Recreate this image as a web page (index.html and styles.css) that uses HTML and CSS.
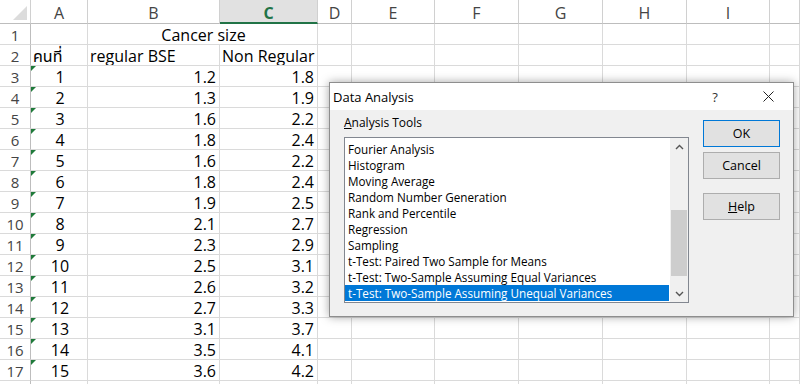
FILE: index.html
```html
<!DOCTYPE html>
<html lang="th">
<head>
    <meta charset="UTF-8">
    <title>Data Analysis</title>
    <link rel="stylesheet" href="styles.css">
</head>
<body>
    <div class="sheet">
        <div class="row head">
            <div class="corner"><span class="tri"></span></div>
            <div class="ch">A</div>
            <div class="ch">B</div>
            <div class="ch sel">C</div>
            <div class="ch">D</div>
            <div class="ch">E</div>
            <div class="ch">F</div>
            <div class="ch">G</div>
            <div class="ch">H</div>
            <div class="ch">I</div>
            <div class="ch"></div>
        </div>
        <div class="row">
            <div class="rh">1</div>
            <div class="c"></div>
            <div class="c merged">Cancer size</div>
            <div class="c"></div><div class="c"></div><div class="c"></div><div class="c"></div><div class="c"></div><div class="c"></div><div class="c"></div>
        </div>
        <div class="row">
            <div class="rh">2</div>
            <div class="c">คนที่</div>
            <div class="c">regular BSE</div>
            <div class="c">Non Regular</div>
            <div class="c"></div><div class="c"></div><div class="c"></div><div class="c"></div><div class="c"></div><div class="c"></div><div class="c"></div>
        </div>
        <div class="row">
            <div class="rh">3</div><div class="c txt">1</div><div class="c num">1.2</div><div class="c num">1.8</div>
            <div class="c"></div><div class="c"></div><div class="c"></div><div class="c"></div><div class="c"></div><div class="c"></div><div class="c"></div>
        </div>
        <div class="row">
            <div class="rh">4</div><div class="c txt">2</div><div class="c num">1.3</div><div class="c num">1.9</div>
            <div class="c"></div><div class="c"></div><div class="c"></div><div class="c"></div><div class="c"></div><div class="c"></div><div class="c"></div>
        </div>
        <div class="row">
            <div class="rh">5</div><div class="c txt">3</div><div class="c num">1.6</div><div class="c num">2.2</div>
            <div class="c"></div><div class="c"></div><div class="c"></div><div class="c"></div><div class="c"></div><div class="c"></div><div class="c"></div>
        </div>
        <div class="row">
            <div class="rh">6</div><div class="c txt">4</div><div class="c num">1.8</div><div class="c num">2.4</div>
            <div class="c"></div><div class="c"></div><div class="c"></div><div class="c"></div><div class="c"></div><div class="c"></div><div class="c"></div>
        </div>
        <div class="row">
            <div class="rh">7</div><div class="c txt">5</div><div class="c num">1.6</div><div class="c num">2.2</div>
            <div class="c"></div><div class="c"></div><div class="c"></div><div class="c"></div><div class="c"></div><div class="c"></div><div class="c"></div>
        </div>
        <div class="row">
            <div class="rh">8</div><div class="c txt">6</div><div class="c num">1.8</div><div class="c num">2.4</div>
            <div class="c"></div><div class="c"></div><div class="c"></div><div class="c"></div><div class="c"></div><div class="c"></div><div class="c"></div>
        </div>
        <div class="row">
            <div class="rh">9</div><div class="c txt">7</div><div class="c num">1.9</div><div class="c num">2.5</div>
            <div class="c"></div><div class="c"></div><div class="c"></div><div class="c"></div><div class="c"></div><div class="c"></div><div class="c"></div>
        </div>
        <div class="row">
            <div class="rh">10</div><div class="c txt">8</div><div class="c num">2.1</div><div class="c num">2.7</div>
            <div class="c"></div><div class="c"></div><div class="c"></div><div class="c"></div><div class="c"></div><div class="c"></div><div class="c"></div>
        </div>
        <div class="row">
            <div class="rh">11</div><div class="c txt">9</div><div class="c num">2.3</div><div class="c num">2.9</div>
            <div class="c"></div><div class="c"></div><div class="c"></div><div class="c"></div><div class="c"></div><div class="c"></div><div class="c"></div>
        </div>
        <div class="row">
            <div class="rh">12</div><div class="c txt">10</div><div class="c num">2.5</div><div class="c num">3.1</div>
            <div class="c"></div><div class="c"></div><div class="c"></div><div class="c"></div><div class="c"></div><div class="c"></div><div class="c"></div>
        </div>
        <div class="row">
            <div class="rh">13</div><div class="c txt">11</div><div class="c num">2.6</div><div class="c num">3.2</div>
            <div class="c"></div><div class="c"></div><div class="c"></div><div class="c"></div><div class="c"></div><div class="c"></div><div class="c"></div>
        </div>
        <div class="row">
            <div class="rh">14</div><div class="c txt">12</div><div class="c num">2.7</div><div class="c num">3.3</div>
            <div class="c"></div><div class="c"></div><div class="c"></div><div class="c"></div><div class="c"></div><div class="c"></div><div class="c"></div>
        </div>
        <div class="row">
            <div class="rh">15</div><div class="c txt">13</div><div class="c num">3.1</div><div class="c num">3.7</div>
            <div class="c"></div><div class="c"></div><div class="c"></div><div class="c"></div><div class="c"></div><div class="c"></div><div class="c"></div>
        </div>
        <div class="row">
            <div class="rh">16</div><div class="c txt">14</div><div class="c num">3.5</div><div class="c num">4.1</div>
            <div class="c"></div><div class="c"></div><div class="c"></div><div class="c"></div><div class="c"></div><div class="c"></div><div class="c"></div>
        </div>
        <div class="row">
            <div class="rh">17</div><div class="c txt">15</div><div class="c num">3.6</div><div class="c num">4.2</div>
            <div class="c"></div><div class="c"></div><div class="c"></div><div class="c"></div><div class="c"></div><div class="c"></div><div class="c"></div>
        </div>
        <div class="row">
            <div class="rh"></div><div class="c"></div><div class="c"></div><div class="c"></div>
            <div class="c"></div><div class="c"></div><div class="c"></div><div class="c"></div><div class="c"></div><div class="c"></div><div class="c"></div>
        </div>
    </div>

    <!-- กล่องโต้ตอบ Data Analysis -->
    <div class="dialog">
        <div class="titlebar">
            <span class="title">Data Analysis</span>
            <span class="qmark">?</span>
            <span class="close">
                <svg width="11" height="11" viewBox="0 0 11 11"><path d="M0.5 0.5 L10.5 10.5 M10.5 0.5 L0.5 10.5" stroke="#222" stroke-width="1" fill="none"/></svg>
            </span>
        </div>
        <div class="dlg-body">
            <div class="tools">
                <div class="label"><u>A</u>nalysis Tools</div>
                <div class="listbox">
                    <div class="items">
                        <div class="item">Fourier Analysis</div>
                        <div class="item">Histogram</div>
                        <div class="item">Moving Average</div>
                        <div class="item">Random Number Generation</div>
                        <div class="item">Rank and Percentile</div>
                        <div class="item">Regression</div>
                        <div class="item">Sampling</div>
                        <div class="item">t-Test: Paired Two Sample for Means</div>
                        <div class="item">t-Test: Two-Sample Assuming Equal Variances</div>
                        <div class="item active">t-Test: Two-Sample Assuming Unequal Variances</div>
                    </div>
                    <div class="scrollbar">
                        <div class="arrow">
                            <svg width="9" height="6" viewBox="0 0 9 6"><polyline points="1,5 4.5,1.5 8,5" stroke="#555" stroke-width="1.4" fill="none"/></svg>
                        </div>
                        <div class="track"><div class="thumb"></div></div>
                        <div class="arrow">
                            <svg width="9" height="6" viewBox="0 0 9 6"><polyline points="1,1 4.5,4.5 8,1" stroke="#555" stroke-width="1.4" fill="none"/></svg>
                        </div>
                    </div>
                </div>
            </div>
            <div class="buttons">
                <button class="btn default">OK</button>
                <button class="btn">Cancel</button>
                <button class="btn help"><u>H</u>elp</button>
            </div>
        </div>
    </div>
</body>
</html>
```

FILE: styles.css
```css
body {
    margin: 0;
    width: 800px;
    height: 384px;
    overflow: hidden;
    position: relative;
    background: #fff;
    font-family: 'Open Sans', 'Noto Sans Thai', 'Noto Sans', 'DejaVu Sans', sans-serif;
    color: #000;
}
.row {
    display: grid;
    grid-template-columns: 31px 57px 132px 98px 34px 83px 84px 84px 84px 83px 30px;
    height: 21px;
}
.row > div {
    box-sizing: border-box;
    border-right: 1px solid #dadada;
    border-bottom: 1px solid #dadada;
    font-size: 16px;
    line-height: 20px;
    padding-top: 1px;
    white-space: nowrap;
    overflow: hidden;
}
.head {
    height: 24px;
}
.head > div {
    border-right-color: #d0d0d0;
    border-bottom-color: #bdbdbd;
    text-align: center;
    color: #444;
    padding-top: 3px;
}
.corner {
    position: relative;
}
.tri {
    position: absolute;
    right: 3px;
    bottom: 3px;
    width: 0;
    height: 0;
    border-left: 14px solid transparent;
    border-bottom: 14px solid #dcdcdc;
}
.ch.sel {
    background: #e1e1e1;
    color: #217346;
    font-weight: 700;
    border-bottom: 2px solid #217346;
}
.rh {
    text-align: center;
    color: #444;
    font-size: 15px !important;
    border-right-color: #bdbdbd !important;
}
.c {
    padding-left: 2px;
}
.merged {
    grid-column: span 2;
    text-align: center;
}
.txt {
    position: relative;
    text-align: center;
}
.txt::before {
    content: "";
    position: absolute;
    left: 0;
    top: 0;
    border-top: 5px solid #1f7a3a;
    border-right: 5px solid transparent;
}
.num {
    text-align: right;
    padding-right: 3px;
}

/* dialog */
.dialog {
    position: absolute;
    left: 329px;
    top: 82px;
    width: 465px;
    height: 235px;
    box-sizing: border-box;
    border: 1px solid #8e8e8e;
    background: #f0f0f0;
    box-shadow: 0 0 9px rgba(0, 0, 0, 0.35);
    display: flex;
    flex-direction: column;
}
.titlebar {
    height: 27px;
    background: #fff;
    display: flex;
    align-items: center;
    padding-left: 3px;
    font-size: 13px;
}
.title {
    flex: 1;
}
.qmark {
    width: 30px;
    text-align: center;
    color: #333;
    font-size: 13px;
    margin-right: 15px;
}
.close {
    width: 46px;
    height: 27px;
    display: flex;
    align-items: center;
    justify-content: center;
    margin-right: 2px;
}
.dlg-body {
    display: flex;
    padding: 0 13px 0 14px;
    font-size: 11.7px;
}
.tools {
    width: 345px;
    display: flex;
    flex-direction: column;
}
.label {
    margin-top: 5px;
    line-height: 16px;
    font-size: 12px;
}
.listbox {
    margin-top: 6px;
    height: 166px;
    box-sizing: border-box;
    border: 1px solid #828790;
    background: #fff;
    display: flex;
}
.items {
    flex: 1;
    padding-top: 3px;
    margin-right: 1px;
}
.item {
    height: 16px;
    line-height: 16px;
    padding-left: 3px;
    white-space: nowrap;
}
.item.active {
    background: #0078d7;
    color: #fff;
}
.scrollbar {
    width: 18px;
    background: #f0f0f0;
    display: flex;
    flex-direction: column;
}
.arrow {
    height: 17px;
    display: flex;
    align-items: center;
    justify-content: center;
}
.track {
    flex: 1;
    padding: 0 1px;
}
.thumb {
    margin-top: 55px;
    height: 66px;
    background: #cdcdcd;
}
.buttons {
    width: 77px;
    margin-left: 14px;
    padding-top: 10px;
    display: flex;
    flex-direction: column;
}
.btn {
    height: 27px;
    box-sizing: border-box;
    border: 1px solid #adadad;
    background: #e1e1e1;
    font-family: inherit;
    font-size: 12.5px;
    color: #000;
    padding: 0;
    margin-top: 5px;
}
.btn.default {
    border-color: #0078d7;
    margin-top: 0;
}
.btn.help {
    margin-top: 14px;
}
```
